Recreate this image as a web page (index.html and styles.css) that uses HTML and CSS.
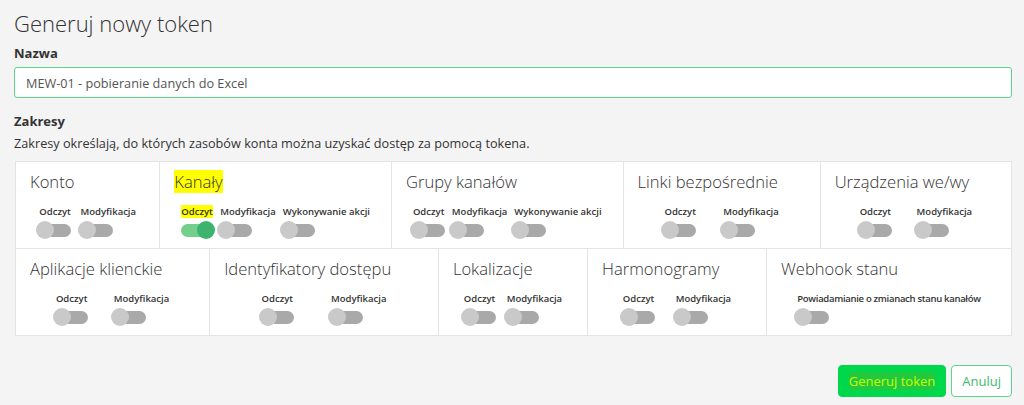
FILE: index.html
```html
<!DOCTYPE html>
<html lang="pl">
<head>
    <meta charset="UTF-8">
    <meta name="viewport" content="width=device-width, initial-scale=1.0">
    <title>Generuj nowy token</title>
    <link rel="stylesheet" href="styles.css">
</head>
<body>
    <h1>Generuj nowy token</h1>

    <label class="field-label" for="token-name">Nazwa</label>
    <input id="token-name" class="text-input" type="text" value="MEW-01 - pobieranie danych do Excel">

    <div class="field-label section">Zakresy</div>
    <p class="hint">Zakresy określają, do których zasobów konta można uzyskać dostęp za pomocą tokena.</p>

    <div class="scopes">
        <div class="scope">
            <div class="scope-title">Konto</div>
            <div class="perms">
                <div class="perm"><span>Odczyt</span><span class="switch"></span></div>
                <div class="perm"><span>Modyfikacja</span><span class="switch"></span></div>
            </div>
        </div>
        <div class="scope">
            <div class="scope-title"><mark>Kanały</mark></div>
            <div class="perms">
                <div class="perm"><span><mark>Odczyt</mark></span><span class="switch on"></span></div>
                <div class="perm"><span>Modyfikacja</span><span class="switch"></span></div>
                <div class="perm"><span>Wykonywanie akcji</span><span class="switch"></span></div>
            </div>
        </div>
        <div class="scope">
            <div class="scope-title">Grupy kanałów</div>
            <div class="perms">
                <div class="perm"><span>Odczyt</span><span class="switch"></span></div>
                <div class="perm"><span>Modyfikacja</span><span class="switch"></span></div>
                <div class="perm"><span>Wykonywanie akcji</span><span class="switch"></span></div>
            </div>
        </div>
        <div class="scope">
            <div class="scope-title">Linki bezpośrednie</div>
            <div class="perms">
                <div class="perm"><span>Odczyt</span><span class="switch"></span></div>
                <div class="perm"><span>Modyfikacja</span><span class="switch"></span></div>
            </div>
        </div>
        <div class="scope">
            <div class="scope-title">Urządzenia we/wy</div>
            <div class="perms">
                <div class="perm"><span>Odczyt</span><span class="switch"></span></div>
                <div class="perm"><span>Modyfikacja</span><span class="switch"></span></div>
            </div>
        </div>
        <div class="scope">
            <div class="scope-title">Aplikacje klienckie</div>
            <div class="perms">
                <div class="perm"><span>Odczyt</span><span class="switch"></span></div>
                <div class="perm"><span>Modyfikacja</span><span class="switch"></span></div>
            </div>
        </div>
        <div class="scope">
            <div class="scope-title">Identyfikatory dostępu</div>
            <div class="perms">
                <div class="perm"><span>Odczyt</span><span class="switch"></span></div>
                <div class="perm"><span>Modyfikacja</span><span class="switch"></span></div>
            </div>
        </div>
        <div class="scope">
            <div class="scope-title">Lokalizacje</div>
            <div class="perms">
                <div class="perm"><span>Odczyt</span><span class="switch"></span></div>
                <div class="perm"><span>Modyfikacja</span><span class="switch"></span></div>
            </div>
        </div>
        <div class="scope">
            <div class="scope-title">Harmonogramy</div>
            <div class="perms">
                <div class="perm"><span>Odczyt</span><span class="switch"></span></div>
                <div class="perm"><span>Modyfikacja</span><span class="switch"></span></div>
            </div>
        </div>
        <div class="scope">
            <div class="scope-title">Webhook stanu</div>
            <div class="perms">
                <div class="perm perm-long"><span>Powiadamianie o zmianach stanu kanałów</span><span class="switch"></span></div>
            </div>
        </div>
    </div>

    <div class="actions">
        <button class="btn btn-primary"><span class="btn-text">Generuj token</span></button>
        <button class="btn btn-outline">Anuluj</button>
    </div>
</body>
</html>
```

FILE: styles.css
```css
body {
    font-family: "Open Sans", "Noto Sans", sans-serif;
    font-size: 12.7px;
    color: #333;
    background-color: #f4f4f4;
    margin: 0;
    padding: 0 12px 0 14px;
}
h1 {
    font-size: 22px;
    font-weight: 300;
    color: #333;
    margin: 0;
    padding-top: 8px;
    line-height: 30px;
}
.field-label {
    display: block;
    font-weight: 700;
    font-size: 13px;
    line-height: 18px;
    margin-top: 6px;
}
.field-label.section {
    margin-top: 14px;
}
.text-input {
    display: block;
    box-sizing: border-box;
    width: 100%;
    height: 31px;
    margin-top: 5px;
    padding: 0 11px;
    font-family: inherit;
    font-size: 12.7px;
    color: #555;
    background: #fff;
    border: 1px solid #5cd68a;
    border-radius: 3px;
    outline: none;
}
.hint {
    margin: 4px 0 0;
    line-height: 18px;
}
.scopes {
    display: flex;
    flex-wrap: wrap;
    gap: 1px;
    margin-top: 9px;
    margin-left: 1px;
    background-color: #e4e4e4;
    border: 1px solid #e4e4e4;
}
.scope {
    flex: 1 1 auto;
    background-color: #fff;
    padding: 9px 14px 9px;
}
.scope-title {
    font-size: 16.6px;
    font-weight: 300;
    line-height: 22px;
    color: #333;
    white-space: nowrap;
}
mark {
    background-color: #ffff00;
    color: inherit;
}
.perms {
    display: flex;
    justify-content: space-evenly;
    margin-top: 12px;
}
.perm {
    display: flex;
    flex-direction: column;
    align-items: flex-start;
    font-size: 9.5px;
    font-weight: 600;
    line-height: 13px;
    white-space: nowrap;
}
.perm-long {
    letter-spacing: -0.3px;
}
.switch {
    position: relative;
    display: block;
    width: 32px;
    height: 18px;
    margin-top: 3px;
    cursor: pointer;
}
.switch::before {
    content: "";
    position: absolute;
    left: 0;
    top: 3px;
    width: 32px;
    height: 13px;
    border-radius: 7px;
    background-color: #a9a9a9;
}
.switch::after {
    content: "";
    position: absolute;
    left: -3px;
    top: 0;
    width: 18px;
    height: 18px;
    border-radius: 50%;
    background-color: #c9c9c9;
}
.switch.on::before {
    background-color: #72cf8c;
}
.switch.on::after {
    left: 16px;
    background-color: #3cb46e;
}
.actions {
    display: flex;
    justify-content: flex-end;
    gap: 5px;
    margin-top: 29px;
}
.btn {
    height: 32px;
    padding: 0 10px;
    font-family: inherit;
    font-size: 13px;
    border-radius: 4px;
    cursor: pointer;
}
.btn-primary {
    background-color: #00d84c;
    border: 1px solid #00d84c;
}
.btn-text {
    background-color: #22c83e;
    color: #c8ff00;
}
.btn-outline {
    background-color: #fff;
    border: 1px solid #5cd68a;
    color: #3cba6e;
}
```
